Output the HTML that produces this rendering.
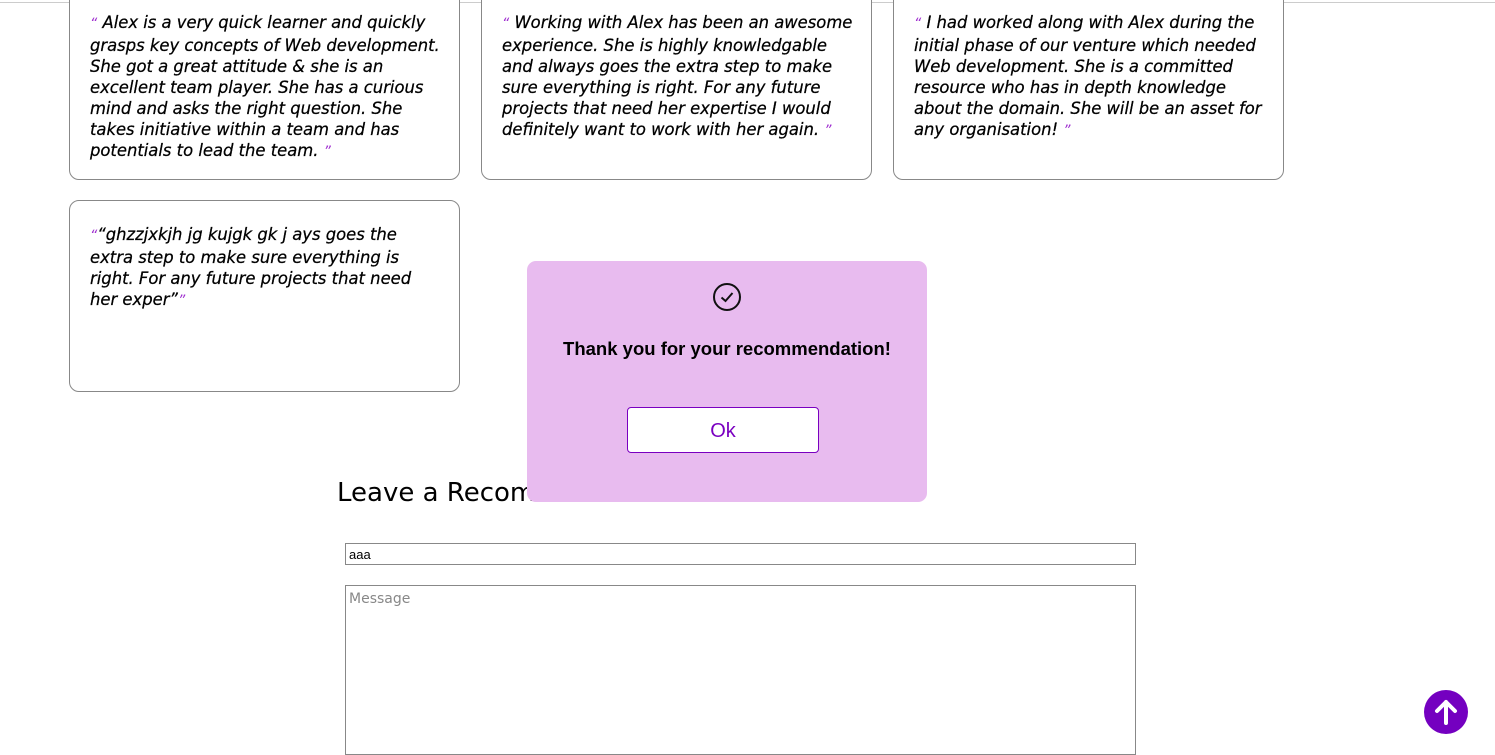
<!DOCTYPE html>
<html><head><style>
body{margin:0;width:1495px;height:747px;overflow:hidden;background:#fff;font-family:"Liberation Sans",sans-serif;position:relative}
.topline{position:absolute;left:0;top:2px;width:1495px;height:1px;background:#ccc}
.card{position:absolute;width:389px;border:1px solid #888;border-radius:10px;box-sizing:content-box;background:#fff}
.card p{margin:0;position:absolute;left:20px;font-family:"DejaVu Sans",sans-serif;font-style:italic;font-size:16.4px;line-height:21px;color:#000;white-space:nowrap;-webkit-text-stroke:0.25px #000}
.q{color:#a030d0;font-size:14px;-webkit-text-stroke:0}
.modal{position:absolute;left:527px;top:261px;width:400px;height:241px;background:#e8bbef;border-radius:9px}
.modal h3{position:absolute;left:0;right:0;top:77px;margin:0;text-align:center;font-size:18.5px;font-weight:bold;color:#000}
.ok{position:absolute;left:100px;top:146px;width:190px;height:44px;background:#fff;border:1px solid #7a00c0;border-radius:4px;color:#7a00c0;font-size:20px;text-align:center;line-height:46px}
h2{position:absolute;left:337px;top:478px;margin:0;font-weight:normal;font-size:26px;font-family:"DejaVu Sans",sans-serif;color:#000}
.in{position:absolute;left:345px;width:789px;border:1px solid #888;background:#fff}
</style></head><body>
<div class="topline"></div>
<div class="card" style="left:69px;top:-12px;height:190px"><p style="top:23px"><span class="q">“</span> Alex is a very quick learner and quickly<br>grasps key concepts of Web development.<br>She got a great attitude &amp; she is an<br>excellent team player. She has a curious<br>mind and asks the right question. She<br>takes initiative within a team and has<br>potentials to lead the team. <span class="q">”</span></p></div>
<div class="card" style="left:481px;top:-12px;height:190px"><p style="top:23px"><span class="q">“</span> Working with Alex has been an awesome<br>experience. She is highly knowledgable<br>and always goes the extra step to make<br>sure everything is right. For any future<br>projects that need her expertise I would<br>definitely want to work with her again. <span class="q">”</span></p></div>
<div class="card" style="left:893px;top:-12px;height:190px"><p style="top:23px"><span class="q">“</span> I had worked along with Alex during the<br>initial phase of our venture which needed<br>Web development. She is a committed<br>resource who has in depth knowledge<br>about the domain. She will be an asset for<br>any organisation! <span class="q">”</span></p></div>
<div class="card" style="left:69px;top:200px;height:190px"><p style="top:23px"><span class="q">“</span>“ghzzjxkjh jg kujgk gk j ays goes the<br>extra step to make sure everything is<br>right. For any future projects that need<br>her exper”<span class="q">”</span></p></div>
<h2>Leave a Recommendation</h2>
<div class="in" style="top:543px;height:22px;font-size:13px;line-height:22px;padding-left:3px;box-sizing:border-box;width:791px">aaa</div>
<div class="in" style="top:585px;height:170px;color:#888;padding:5px 3px;box-sizing:border-box;width:791px;font-family:'DejaVu Sans',sans-serif;font-size:14px">Message</div>
<div class="modal">
<svg style="position:absolute;left:185px;top:21px" width="30" height="30" viewBox="0 0 30 30"><circle cx="15" cy="15" r="13" fill="none" stroke="#111" stroke-width="2"/><path d="M9.5 15.5l4 3.5 7-8" fill="none" stroke="#111" stroke-width="2"/></svg>
<h3>Thank you for your recommendation!</h3>
<div class="ok">Ok</div>
</div>
<svg style="position:absolute;left:1424px;top:690px" width="46" height="46" viewBox="0 0 46 46"><circle cx="22" cy="22" r="22" fill="#7400c0"/><path d="M22 33V12M13 21l9-9 9 9" fill="none" stroke="#fff" stroke-width="4" stroke-linecap="round" stroke-linejoin="round"/></svg>
</body></html>
